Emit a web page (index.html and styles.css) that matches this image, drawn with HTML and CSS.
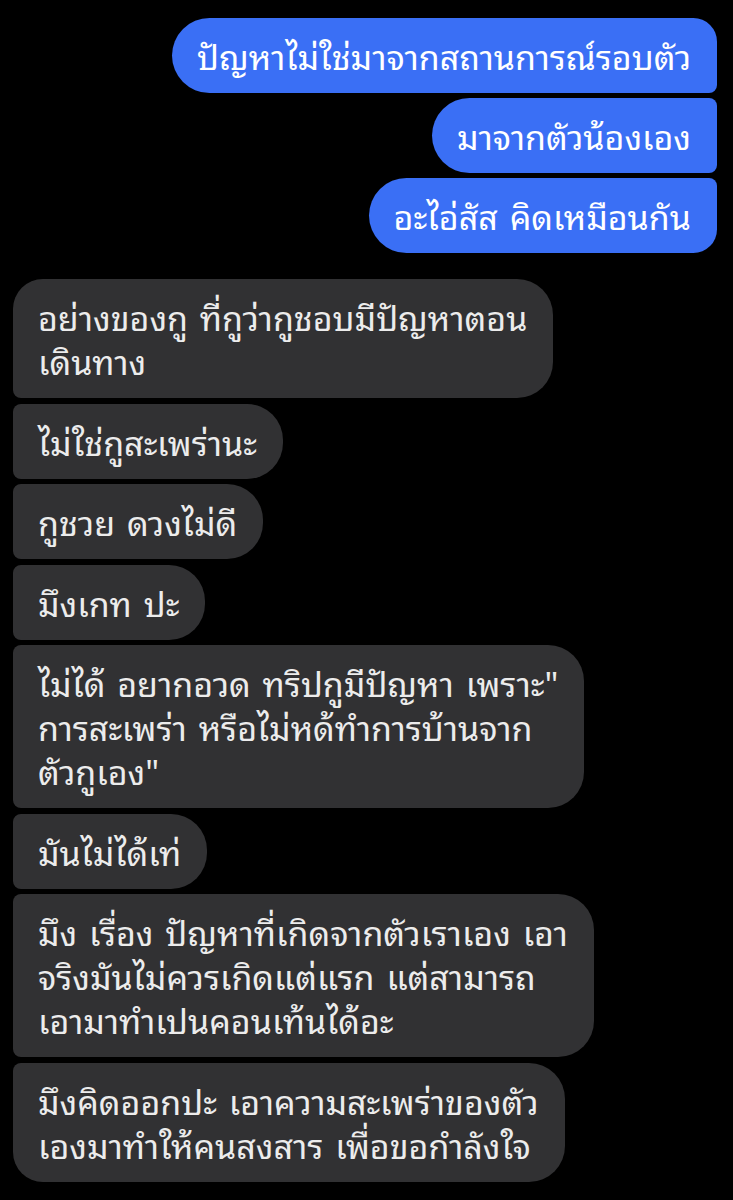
FILE: index.html
```html
<!DOCTYPE html>
<html>

<head>
    <title>Chat</title>
    <meta http-equiv="Content-Type" content="text/html;charset=UTF-8">
    <meta name="viewport" content="width=device-width, initial-scale=1.0">
    <link rel="stylesheet" href="styles.css">
</head>

<body>
    <div class="chat">
        <div class="group group--sent">
            <div class="bubble bubble--sent">ปัญหาไม่ใช่มาจากสถานการณ์รอบตัว</div>
            <div class="bubble bubble--sent">มาจากตัวน้องเอง</div>
            <div class="bubble bubble--sent">อะไอ่สัส คิดเหมือนกัน</div>
        </div>
        <div class="group group--received">
            <div class="bubble bubble--received">อย่างของกู ที่กูว่ากูชอบมีปัญหาตอน<br>เดินทาง</div>
            <div class="bubble bubble--received">ไม่ใช่กูสะเพร่านะ</div>
            <div class="bubble bubble--received">กูชวย ดวงไม่ดี</div>
            <div class="bubble bubble--received">มึงเกท ปะ</div>
            <div class="bubble bubble--received">ไม่ได้ อยากอวด ทริปกูมีปัญหา เพราะ"<br>การสะเพร่า หรือไม่หด้ทำการบ้านจาก<br>ตัวกูเอง"</div>
            <div class="bubble bubble--received">มันไม่ได้เท่</div>
            <div class="bubble bubble--received">มึง เรื่อง ปัญหาที่เกิดจากตัวเราเอง เอา<br>จริงมันไม่ควรเกิดแต่แรก แต่สามารถ<br>เอามาทำเปนคอนเท้นได้อะ</div>
            <div class="bubble bubble--received">มึงคิดออกปะ เอาความสะเพร่าของตัว<br>เองมาทำให้คนสงสาร เพื่อขอกำลังใจ</div>
        </div>
    </div>
</body>

</html>
```

FILE: styles.css
```css
* {
    box-sizing: border-box;
}

body {
    margin: 0;
    background-color: #000;
    font-family: "Noto Sans Thai Looped", "Noto Sans", "Noto Sans Thai", sans-serif;
}

.chat {
    display: flex;
    flex-direction: column;
    gap: 26px;
    padding: 18px 16px 0 13px;
}

.group {
    display: flex;
    flex-direction: column;
    gap: 5.5px;
}

.group--sent {
    align-items: flex-end;
    gap: 5px;
}

.group--received {
    align-items: flex-start;
}

.bubble {
    font-size: 34px;
    line-height: 44px;
    word-spacing: 3px;
    padding: 15px 26px 16px 25px;
    white-space: nowrap;
}

.bubble--sent {
    background-color: #3a6ff5;
    color: #fff;
    border-radius: 38px 8px 8px 38px;
}

.bubble--sent:first-child {
    border-top-right-radius: 24px;
}

.bubble--sent:last-child {
    border-bottom-right-radius: 24px;
}

.bubble--received {
    background-color: #313133;
    color: #ececec;
    border-radius: 8px 36px 36px 8px;
}

.bubble--received:first-child {
    border-top-left-radius: 30px;
}

.bubble--received:last-child {
    border-bottom-left-radius: 30px;
}
```
